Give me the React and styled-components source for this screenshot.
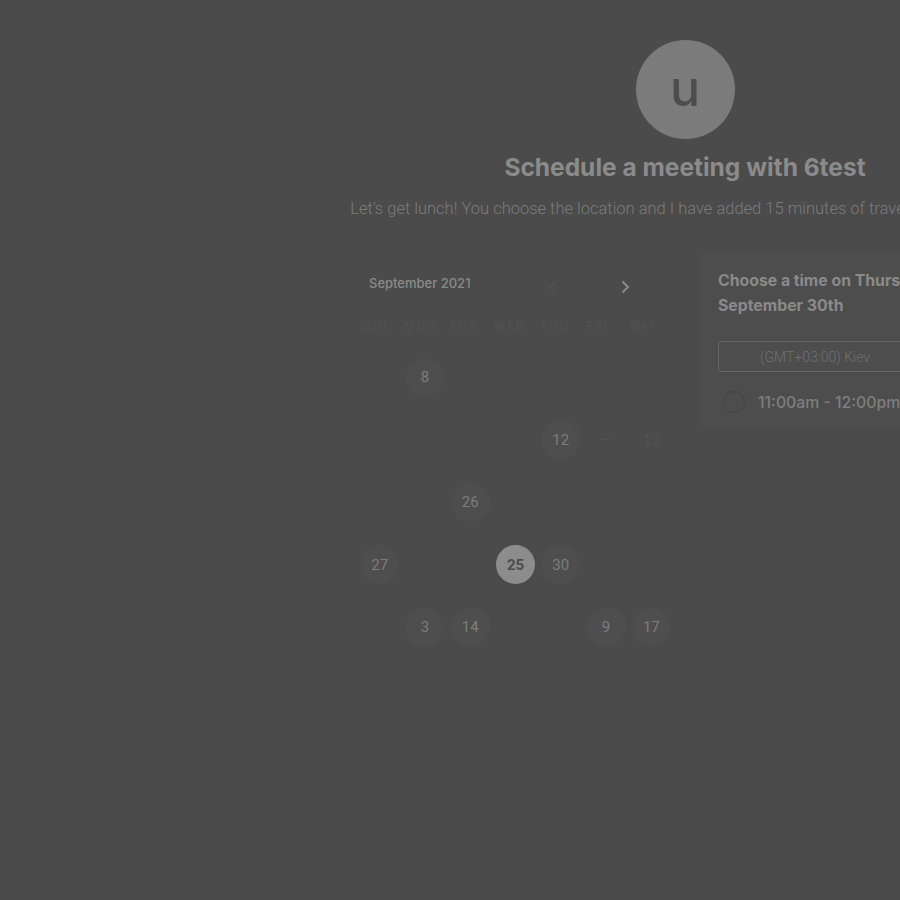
import React from 'react';
import styled, { createGlobalStyle } from 'styled-components';

const GlobalStyle = createGlobalStyle`
  html, body {
    margin: 0;
    padding: 0;
    background: #4b4b4b;
    overflow: hidden;
  }
  body {
    font-family: Inter, "Liberation Sans", sans-serif;
  }
`;

const Page = styled.div`
  width: 1370px;
  min-height: 900px;
  display: flex;
  flex-direction: column;
  align-items: center;
  padding-top: 40px;
  box-sizing: border-box;
`;

const Avatar = styled.div`
  width: 99px;
  height: 99px;
  border-radius: 50%;
  background: #7b7b7b;
  color: #4d4d4d;
  display: flex;
  align-items: center;
  justify-content: center;
  font-family: Inter, sans-serif;
  font-size: 50px;
  font-weight: 500;
  line-height: 1;
  padding-bottom: 4px;
  box-sizing: border-box;
`;

const Title = styled.h1`
  margin: 14px 0 0;
  font-size: 24.5px;
  line-height: 28px;
  font-weight: 700;
  color: #8b8b8b;
`;

const Description = styled.p`
  margin: 18px 0 0;
  font-family: Roboto, "Liberation Sans", sans-serif;
  font-weight: 300;
  font-size: 16.5px;
  line-height: 20px;
  color: #7b7b7b;
  white-space: nowrap;
`;

const Booking = styled.div`
  margin-top: 34px;
  width: 658px;
  display: flex;
  gap: 27px;
  align-items: flex-start;
`;

const Calendar = styled.div`
  width: 317px;
  flex-shrink: 0;
  padding-left: 1px;
`;

const CalHeader = styled.div`
  height: 60px;
  display: flex;
  align-items: center;
  justify-content: space-between;
  padding: 0 44px 0 12px;
`;

const Month = styled.span`
  font-size: 13px;
  font-weight: 500;
  color: #8a8a8a;
`;

const Nav = styled.div`
  display: flex;
  gap: 62px;
  align-items: center;
  padding-top: 8px;
`;

const NavButton = styled.span`
  display: flex;
  color: ${(p) => (p.$faint ? '#525252' : '#8c8c8c')};
`;

const Weekdays = styled.div`
  display: grid;
  grid-template-columns: repeat(7, 1fr);
  height: 26px;
  align-items: center;
`;

const Weekday = styled.span`
  padding-left: 2px;
  font-family: Roboto, sans-serif;
  font-size: 12px;
  letter-spacing: 2px;
  color: #525252;
`;

const Days = styled.div`
  margin-top: 7px;
  display: grid;
  grid-template-columns: repeat(7, 1fr);
  grid-auto-rows: 62.5px;
`;

const Cell = styled.div`
  display: flex;
  align-items: center;
  justify-content: center;
`;

const Day = styled.span`
  width: 39px;
  height: 39px;
  border-radius: 50%;
  display: flex;
  align-items: center;
  justify-content: center;
  font-family: Roboto, sans-serif;
  font-size: 15px;
  background: ${(p) => (p.$selected ? '#8c8c8c' : p.$ghost ? 'transparent' : '#4e4e4e')};
  color: ${(p) => (p.$selected ? '#4d4d4d' : p.$ghost ? '#535353' : '#7d7d7d')};
  font-weight: ${(p) => (p.$selected ? 700 : 400)};
`;

const Panel = styled.div`
  flex: 1;
  background: #4d4d4d;
  border-radius: 4px;
  padding: 15px 17px 14px;
  box-shadow: 0 0 0 1px #4e4e4e;
`;

const PanelTitle = styled.h2`
  margin: 0;
  font-size: 15.8px;
  line-height: 25px;
  font-weight: 700;
  color: #8a8a8a;
`;

const Timezone = styled.div`
  margin-top: 23px;
  width: 194px;
  height: 31px;
  border: 1px solid #666666;
  border-radius: 3px;
  box-sizing: border-box;
  display: flex;
  align-items: center;
  justify-content: center;
  font-family: Roboto, sans-serif;
  font-weight: 300;
  font-size: 14px;
  color: #707070;
`;

const Slot = styled.label`
  margin-top: 19px;
  display: flex;
  align-items: center;
  gap: 13px;
  padding-left: 5px;
`;

const Radio = styled.span`
  width: 22px;
  height: 22px;
  border-radius: 50%;
  border: 1px solid #434343;
  box-sizing: border-box;
`;

const SlotText = styled.span`
  font-size: 15.8px;
  font-weight: 500;
  color: #7e7e7e;
`;

const Chevron = () => (
  <svg width="10" height="14" viewBox="0 0 10 14" fill="none">
    <path d="M2.5 1.5L8 7L2.5 12.5" stroke="currentColor" strokeWidth="1.8" />
  </svg>
);

const ChevronLeft = () => (
  <svg width="10" height="14" viewBox="0 0 10 14" fill="none">
    <path d="M7.5 1.5L2 7L7.5 12.5" stroke="currentColor" strokeWidth="1.8" />
  </svg>
);

const weekdays = ['SUN', 'MON', 'TUE', 'WED', 'THU', 'FRI', 'SAT'];

// 5 weeks x 7 days, only the days that still show on the faded calendar
const days = [
  [null, { n: 8 }, null, null, null, null, null],
  [null, null, null, null, { n: 12 }, { n: '–', ghost: true }, { n: 12, ghost: true }],
  [null, null, { n: 26 }, null, null, null, null],
  [{ n: 27 }, null, null, { n: 25, selected: true }, { n: 30 }, null, null],
  [null, { n: 3 }, { n: 14 }, null, null, { n: 9 }, { n: 17 }],
];

export default function App() {
  return (
    <>
      <GlobalStyle />
      <Page>
        <Avatar>u</Avatar>
        <Title>Schedule a meeting with 6test</Title>
        <Description>
          Let’s get lunch! You choose the location and I have added 15 minutes of travel time each way.
        </Description>
        <Booking>
          <Calendar>
            <CalHeader>
              <Month>September 2021</Month>
              <Nav>
                <NavButton $faint><ChevronLeft /></NavButton>
                <NavButton><Chevron /></NavButton>
              </Nav>
            </CalHeader>
            <Weekdays>
              {weekdays.map((d) => (
                <Weekday key={d}>{d}</Weekday>
              ))}
            </Weekdays>
            <Days>
              {days.flat().map((d, i) => (
                <Cell key={i}>
                  {d && (
                    <Day $selected={d.selected} $ghost={d.ghost}>
                      {d.n}
                    </Day>
                  )}
                </Cell>
              ))}
            </Days>
          </Calendar>
          <Panel>
            <PanelTitle>
              Choose a time on Thursday,
              <br />
              September 30th
            </PanelTitle>
            <Timezone>(GMT+03:00) Kiev</Timezone>
            <Slot>
              <Radio />
              <SlotText>11:00am - 12:00pm</SlotText>
            </Slot>
          </Panel>
        </Booking>
      </Page>
    </>
  );
}
